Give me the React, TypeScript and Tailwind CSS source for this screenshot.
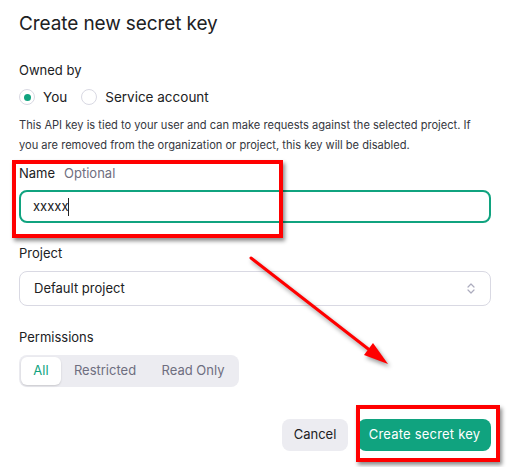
import React from "react";

export default function App() {
  return (
    <div className="relative w-[507px] h-[467px] bg-white overflow-hidden font-['Inter',sans-serif] text-[#202123]">
      <div className="pl-[19px] pr-[16px] pt-[10px]">
        <h1 className="text-[19px] leading-[28px] font-normal tracking-[-0.1px]">Create new secret key</h1>

        <div className="mt-[22px] text-[13px] leading-[20px]">Owned by</div>

        <div className="mt-[7px] h-[20px] flex items-center text-[13.5px]">
          <span className="w-[16px] h-[16px] rounded-full border border-[#d9d9e3] flex items-center justify-center">
            <span className="w-[7px] h-[7px] rounded-full bg-[#10a37f]" />
          </span>
          <span className="ml-[8px]">You</span>
          <span className="ml-[14px] w-[16px] h-[16px] rounded-full border border-[#d9d9e3]" />
          <span className="ml-[8px]">Service account</span>
        </div>

        <p className="mt-[8px] text-[11.1px] leading-[20px] text-[#353740] pr-[10px]">
          This API key is tied to your user and can make requests against the selected project. If you are removed from the organization or project, this key will be disabled.
        </p>

        <div className="mt-[9px] h-[20px] flex items-center text-[13px]">
          <span>Name</span>
          <span className="ml-[9px] text-[#6e6e80]">Optional</span>
        </div>

        <div className="mt-[6px] h-[33px] rounded-[8px] border-2 border-[#10a37f] flex items-center pl-[12px] text-[13px]">
          <span>xxxxx</span>
          <span className="w-[1px] h-[18px] bg-[#202123]" />
        </div>

        <div className="mt-[21px] h-[20px] flex items-center text-[13px]">Project</div>

        <div className="mt-[7px] h-[35px] rounded-[8px] border border-[#d9d9e3] flex items-center justify-between pl-[14px] pr-[15px] text-[13px]">
          <span>Default project</span>
          <svg width="8" height="11" viewBox="0 0 8 11" fill="none" stroke="#acacbe" strokeWidth="1.2" strokeLinecap="round" strokeLinejoin="round">
            <path d="M1 4 L4 1 L7 4" />
            <path d="M1 7 L4 10 L7 7" />
          </svg>
        </div>

        <div className="mt-[22px] h-[20px] flex items-center text-[13px]">Permissions</div>

        <div className="mt-[7px] h-[32px] w-[220px] rounded-[8px] bg-[#ececf1] p-[2px] flex items-center text-[13px] text-[#6e6e80]">
          <div className="h-full w-[40px] rounded-[6px] bg-white shadow-[0_1px_2px_rgba(0,0,0,0.15)] flex items-center justify-center text-[#10a37f]">All</div>
          <div className="h-full w-[88px] flex items-center justify-center">Restricted</div>
          <div className="h-full flex-1 flex items-center justify-center">Read Only</div>
        </div>

        <div className="mt-[32px] flex justify-end gap-[10px] text-[13px]">
          <div className="h-[32px] w-[66px] rounded-[8px] bg-[#ececf1] flex items-center justify-center">Cancel</div>
          <div className="h-[32px] w-[133px] rounded-[8px] bg-[#10a37f] text-white flex items-center justify-center tracking-[0.2px]">Create secret key</div>
        </div>
      </div>

      {/* annotations */}
      <div className="absolute left-[12px] top-[160px] w-[271px] h-[78px] border-[4px] border-[#f00] shadow-[2px_3px_4px_rgba(0,0,0,0.45)]" />
      <div className="absolute left-[356px] top-[405px] w-[144px] h-[57px] border-[4px] border-[#f00] shadow-[2px_3px_4px_rgba(0,0,0,0.45)]" />
      <svg className="absolute left-0 top-0" width="507" height="467" viewBox="0 0 507 467" style={{ filter: "drop-shadow(2px 3px 2px rgba(0,0,0,0.4))" }}>
        <line x1="251" y1="258" x2="376" y2="355" stroke="#f00" strokeWidth="3" strokeLinecap="round" />
        <polygon points="388,364 364,355 373,343" fill="#f00" />
      </svg>
    </div>
  );
}
